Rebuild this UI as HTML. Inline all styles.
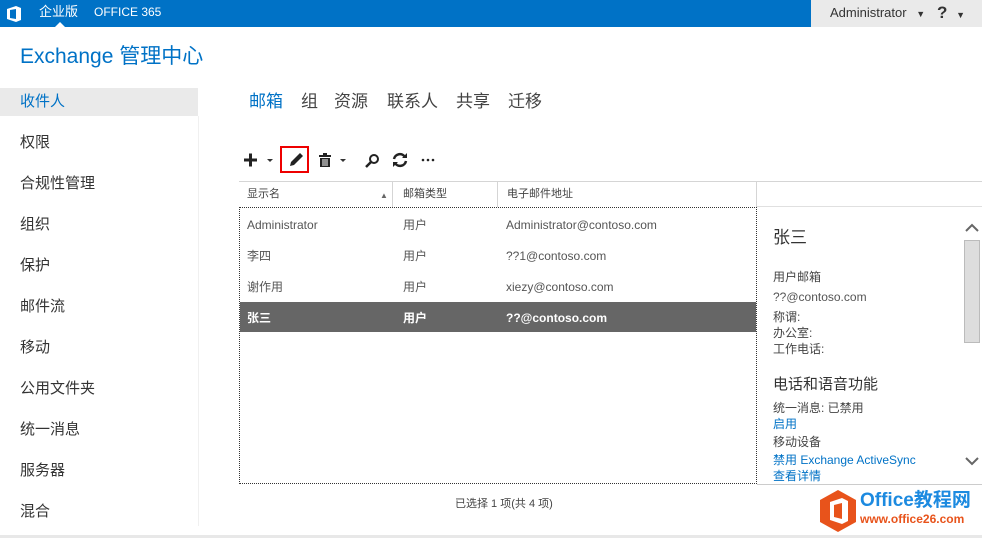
<!DOCTYPE html>
<html><head><meta charset="utf-8"><style>
body{margin:0;width:982px;height:538px;overflow:hidden;background:#fff;font-family:"Liberation Sans","Noto Sans CJK SC",sans-serif;position:relative;color:#333}
.a{position:absolute;white-space:nowrap;line-height:1.15}
.nav{position:absolute;left:20px;font-size:15px;color:#333;line-height:18px}
.tab{font-size:17px;color:#444}
.row{position:absolute;left:240px;width:516px;height:31px;font-size:12px;color:#555}
.row span{position:absolute;top:9px;line-height:14px;height:14px}
.d{font-size:12px;color:#444;position:absolute;left:773px;line-height:14px}
</style></head><body>
<div class="a" style="left:0;top:0;width:811px;height:27px;background:#0072c6"></div>
<div class="a" style="left:811px;top:0;width:171px;height:27px;background:#eaeaea"></div>
<svg class="a" style="left:6px;top:5px" width="16" height="18" viewBox="0 0 16 18"><path d="M1 4 L10 1 L15 3 L15 15 L10 17 L1 14 Z M4 5 L10 4 L10 14 L4 13 Z" fill="#fff" fill-rule="evenodd"/></svg>
<div class="a" style="left:39px;top:5px;color:#fff;font-size:13px">企业版</div>
<div class="a" style="left:55px;top:22px;width:0;height:0;border:5px solid transparent;border-bottom-color:#fff;border-top:0"></div>
<div class="a" style="left:94px;top:6px;color:#fff;font-size:12px">OFFICE 365</div>
<div class="a" style="left:830px;top:6px;color:#333;font-size:13px">Administrator <span style="font-size:9px;margin-left:6px">▼</span></div>
<div class="a" style="left:937px;top:3px;color:#333;font-size:17px;font-weight:bold">? <span style="font-size:9px;font-weight:normal;margin-left:4px">▼</span></div>
<div class="a" style="left:20px;top:45px;font-size:21px;color:#0072c6">Exchange 管理中心</div>
<div class="a" style="left:0;top:88px;width:198px;height:28px;background:#eaeaea"></div>
<div class="a" style="left:198px;top:116px;width:1px;height:410px;background:#f0f0f0"></div>
<div class="nav" style="top:93px;color:#0072c6">收件人</div>
<div class="nav" style="top:134px">权限</div>
<div class="nav" style="top:175px">合规性管理</div>
<div class="nav" style="top:216px">组织</div>
<div class="nav" style="top:257px">保护</div>
<div class="nav" style="top:298px">邮件流</div>
<div class="nav" style="top:339px">移动</div>
<div class="nav" style="top:380px">公用文件夹</div>
<div class="nav" style="top:421px">统一消息</div>
<div class="nav" style="top:462px">服务器</div>
<div class="nav" style="top:503px">混合</div>
<div class="a tab" style="left:249px;top:92px;color:#0072c6">邮箱</div>
<div class="a tab" style="left:301px;top:92px">组</div>
<div class="a tab" style="left:334px;top:92px">资源</div>
<div class="a tab" style="left:387px;top:92px">联系人</div>
<div class="a tab" style="left:456px;top:92px">共享</div>
<div class="a tab" style="left:508px;top:92px">迁移</div>
<svg class="a" style="left:243px;top:150px" width="200" height="20">
<path d="M1 10H14M7.5 3.5V16.5" stroke="#222" stroke-width="3"/>
<path d="M24 9h6l-3 3z" fill="#333"/>
<path d="M47 16l1-4 9-9 3 3-9 9z" fill="#222"/>
<rect x="76" y="5" width="12" height="2" fill="#222"/><rect x="80" y="3" width="4" height="2" fill="#222"/>
<path d="M77 8h10v9h-10z" fill="#222"/><path d="M80 9v7M82 9v7M84 9v7" stroke="#fff" stroke-width="1"/>
<path d="M97 9h6l-3 3z" fill="#333"/>
<circle cx="131" cy="9" r="4" fill="none" stroke="#222" stroke-width="2"/><path d="M128 12l-5 5" stroke="#222" stroke-width="2.5"/>
<path d="M151 9a6 6 0 0 1 11-2M163 11a6 6 0 0 1-11 2" fill="none" stroke="#222" stroke-width="2.5"/><path d="M164 3v5h-5zM150 17v-5h5z" fill="#222"/>
<circle cx="180" cy="10" r="1.3" fill="#222"/><circle cx="185" cy="10" r="1.3" fill="#222"/><circle cx="190" cy="10" r="1.3" fill="#222"/>
</svg>
<div class="a" style="left:280px;top:146px;width:29px;height:27px;border:2px solid #e00;box-sizing:border-box"></div>
<div class="a" style="left:239px;top:181px;width:743px;height:1px;background:#d5d5d5"></div>
<div class="a" style="left:247px;top:188px;font-size:11px;color:#444">显示名</div>
<div class="a" style="left:380px;top:191px;font-size:8px;color:#666">▲</div>
<div class="a" style="left:392px;top:182px;width:1px;height:25px;background:#d5d5d5"></div>
<div class="a" style="left:403px;top:188px;font-size:11px;color:#444">邮箱类型</div>
<div class="a" style="left:497px;top:182px;width:1px;height:25px;background:#d5d5d5"></div>
<div class="a" style="left:507px;top:188px;font-size:11px;color:#444">电子邮件地址</div>
<div class="a" style="left:756px;top:182px;width:1px;height:25px;background:#d5d5d5"></div>
<div class="a" style="left:757px;top:206px;width:225px;height:1px;background:#e0e0e0"></div>
<div class="a" style="left:239px;top:207px;width:518px;height:277px;border:1px dotted #333;box-sizing:border-box"></div>
<div class="row" style="top:209px"><span style="left:7px">Administrator</span><span style="left:163px">用户</span><span style="left:266px">Administrator@contoso.com</span></div>
<div class="row" style="top:240px"><span style="left:7px">李四</span><span style="left:163px">用户</span><span style="left:266px">??1@contoso.com</span></div>
<div class="row" style="top:271px"><span style="left:7px">谢作用</span><span style="left:163px">用户</span><span style="left:266px">xiezy@contoso.com</span></div>
<div class="row" style="top:302px;background:#666;color:#fff;font-weight:bold;height:30px"><span style="left:7px">张三</span><span style="left:163px">用户</span><span style="left:266px">??@contoso.com</span></div>
<div class="a" style="left:773px;top:228px;font-size:17px;color:#333">张三</div>
<div class="d" style="top:270px">用户邮箱</div>
<div class="d" style="top:290px;color:#555">??@contoso.com</div>
<div class="d" style="top:310px">称谓:</div>
<div class="d" style="top:326px">办公室:</div>
<div class="d" style="top:342px">工作电话:</div>
<div class="a" style="left:773px;top:376px;font-size:15px;color:#333">电话和语音功能</div>
<div class="d" style="top:401px">统一消息: 已禁用</div>
<div class="d" style="top:417px;color:#0072c6">启用</div>
<div class="d" style="top:435px">移动设备</div>
<div class="d" style="top:453px;color:#0072c6">禁用 Exchange ActiveSync</div>
<div class="d" style="top:469px;color:#0072c6">查看详情</div>
<div class="a" style="left:964px;top:240px;width:16px;height:103px;background:#ddd;border:1px solid #bbb;box-sizing:border-box"></div>
<svg class="a" style="left:964px;top:222px" width="16" height="12"><path d="M2 9l6-6 6 6" fill="none" stroke="#666" stroke-width="2"/></svg>
<svg class="a" style="left:964px;top:455px" width="16" height="12"><path d="M2 3l6 6 6-6" fill="none" stroke="#666" stroke-width="2"/></svg>
<div class="a" style="left:757px;top:484px;width:225px;height:1px;background:#ccc"></div>
<div class="a" style="left:455px;top:498px;font-size:11px;color:#444">已选择 1 项(共 4 项)</div>
<div class="a" style="left:0;top:535px;width:982px;height:3px;background:#e8e8e8"></div>
<svg class="a" style="left:818px;top:489px" width="40" height="44"><path d="M20 1L38 11V33L20 43L2 33V11Z" fill="#e8531b"/><path d="M12 13L24 9L30 12V32L24 35L12 31Z M16 16L24 14V30L16 28Z" fill="#fff" fill-rule="evenodd"/></svg>
<div class="a" style="left:860px;top:490px;font-size:19px;font-weight:bold;color:#1c8ae0">Office教程网</div>
<div class="a" style="left:860px;top:513px;font-size:12px;font-weight:bold;color:#e8531b">www.office26.com</div>
</body></html>
